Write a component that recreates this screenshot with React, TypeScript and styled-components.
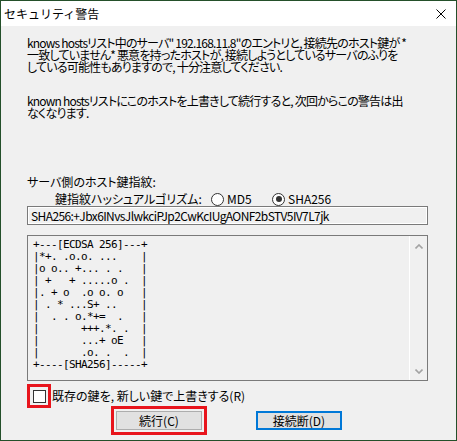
import React from 'react';
import styled, { createGlobalStyle } from 'styled-components';

const GlobalStyle = createGlobalStyle`
  html, body {
    margin: 0;
    padding: 0;
    background: #f0f0f0;
  }
  body {
    font-family: "Noto Sans CJK JP", sans-serif;
    color: #000;
  }
`;

const Window = styled.div`
  width: 457px;
  height: 441px;
  box-sizing: border-box;
  border: 1px solid #24502a;
  display: flex;
  flex-direction: column;
  background: #f0f0f0;
`;

const TitleBar = styled.header`
  height: 25px;
  flex: none;
  background: #fff;
  display: flex;
  align-items: center;
  justify-content: space-between;
  padding: 0 10px 0 3px;
`;

const Title = styled.h1`
  margin: 0;
  font-size: 12px;
  font-weight: normal;
  line-height: 12px;
`;

const CloseIcon = () => (
  <svg width="10" height="10" viewBox="0 0 10 10">
    <path d="M0.5 0.5 L9.5 9.5 M9.5 0.5 L0.5 9.5" stroke="#000" strokeWidth="1" fill="none" />
  </svg>
);

const Client = styled.main`
  flex: 1;
  display: flex;
  flex-direction: column;
  padding: 11px 0 0 26px;
  font-size: 12px;
  line-height: 12px;
  font-feature-settings: "palt";
`;

const Paragraph = styled.div<{ $gap?: number }>`
  margin-top: ${p => p.$gap ?? 0}px;
  letter-spacing: -0.8px;
`;

const Line = styled.div`
  height: 12px;
  white-space: nowrap;
`;

const Label = styled.div<{ $gap?: number }>`
  margin-top: ${p => p.$gap ?? 0}px;
  white-space: nowrap;
`;

const AlgoRow = styled.div`
  margin-top: 4px;
  height: 14px;
  padding-left: 28px;
  display: flex;
  align-items: center;
`;

const AlgoLabel = styled.span`
  width: 156px;
`;

const RadioOption = styled.label<{ $width: number }>`
  display: flex;
  align-items: center;
  gap: 3px;
  width: ${p => p.$width}px;
`;

const RadioCircle = styled.span<{ $checked?: boolean }>`
  width: 13px;
  height: 13px;
  box-sizing: border-box;
  border-radius: 50%;
  border: 1px solid #333;
  background: #fff;
  display: flex;
  align-items: center;
  justify-content: center;
  &::after {
    content: '';
    width: 6px;
    height: 6px;
    border-radius: 50%;
    background: ${p => (p.$checked ? '#333' : 'transparent')};
  }
`;

const Field = styled.div`
  width: 401px;
  height: 19px;
  box-sizing: border-box;
  border: 1px solid #7a7a7a;
  box-shadow: inset 0 0 0 1px #fff;
  padding: 0 3px;
  display: flex;
  align-items: center;
  white-space: nowrap;
  letter-spacing: -0.6px;
`;

const ArtBox = styled.div`
  margin-top: 10px;
  width: 401px;
  height: 146px;
  box-sizing: border-box;
  border: 1px solid #7a7a7a;
  display: flex;
`;

const Art = styled.pre`
  flex: 1;
  margin: 0;
  padding: 3px 0 0 5px;
  font-family: "DejaVu Sans Mono", monospace;
  font-size: 11px;
  letter-spacing: -0.62px;
  line-height: 12px;
`;

const ScrollBar = styled.div`
  width: 17px;
  border-left: 1px solid #fff;
  display: flex;
  flex-direction: column;
  justify-content: space-between;
  align-items: center;
  padding: 8px 0 6px;
`;

const Chevron = ({ down }: { down?: boolean }) => (
  <svg width="8" height="5" viewBox="0 0 8 5">
    <path
      d={down ? 'M0.5 0.5 L4 4 L7.5 0.5' : 'M0.5 4.5 L4 1 L7.5 4.5'}
      stroke="#a3a3a3"
      strokeWidth="1.6"
      fill="none"
    />
  </svg>
);

const CheckRow = styled.label`
  margin-top: 3px;
  display: flex;
  align-items: center;
  gap: 1px;
  white-space: nowrap;
`;

const HighlightFrame = styled.span`
  width: 24px;
  height: 24px;
  box-sizing: border-box;
  border: 3px solid #e8141c;
  display: flex;
  align-items: center;
  justify-content: center;
`;

const CheckBox = styled.span`
  width: 13px;
  height: 13px;
  box-sizing: border-box;
  border: 1px solid #333;
  background: #fff;
`;

const ButtonRow = styled.div`
  margin-top: 3px;
  padding-left: 89px;
  display: flex;
  gap: 54px;
`;

const Button = styled.button<{ $focused?: boolean; $highlight?: boolean }>`
  width: 86px;
  height: 19px;
  box-sizing: border-box;
  padding: 0;
  background: #e1e1e1;
  border: ${p => (p.$focused ? '2px solid #0078d7' : '1px solid #adadad')};
  font-family: inherit;
  font-size: 12px;
  line-height: 12px;
  color: #000;
  outline: ${p => (p.$highlight ? '3px solid #e8141c' : 'none')};
  outline-offset: 2px;
`;

const art = [
  '+---[ECDSA 256]---+',
  '|*+. .o.o. ...    |',
  '|o o.. +... . .   |',
  '| +   + .....o .  |',
  '|. + o  .o o. o   |',
  '| . * ...S+ ..    |',
  '|  . . o.*+=  .   |',
  '|       +++.*. .  |',
  '|       ...+ oE   |',
  '|       .o. .  .  |',
  '+----[SHA256]-----+',
].join('\n');

export default function App() {
  return (
    <>
      <GlobalStyle />
      <Window>
        <TitleBar>
          <Title>セキュリティ警告</Title>
          <CloseIcon />
        </TitleBar>
        <Client>
          <Paragraph>
            <Line>knows hostsリスト中のサーバ" 192.168.11.8"のエントリと, 接続先のホスト鍵が *</Line>
            <Line>一致していません* 悪意を持ったホストが, 接続しようとしているサーバのふりを</Line>
            <Line>している可能性もありますので, 十分注意してください.</Line>
          </Paragraph>
          <Paragraph $gap={22}>
            <Line>known hostsリストにこのホストを上書きして続行すると, 次回からこの警告は出</Line>
            <Line>なくなります.</Line>
          </Paragraph>
          <Label $gap={57}>サーバ側のホスト鍵指紋:</Label>
          <AlgoRow>
            <AlgoLabel>鍵指紋ハッシュアルゴリズム:</AlgoLabel>
            <RadioOption $width={61}>
              <RadioCircle />
              MD5
            </RadioOption>
            <RadioOption $width={70}>
              <RadioCircle $checked />
              SHA256
            </RadioOption>
          </AlgoRow>
          <Field>SHA256:+Jbx6INvsJlwkciPJp2CwKcIUgAONF2bSTV5IV7L7jk</Field>
          <ArtBox>
            <Art>{art}</Art>
            <ScrollBar>
              <Chevron />
              <Chevron down />
            </ScrollBar>
          </ArtBox>
          <CheckRow>
            <HighlightFrame>
              <CheckBox />
            </HighlightFrame>
            既存の鍵を, 新しい鍵で上書きする(R)
          </CheckRow>
          <ButtonRow>
            <Button $highlight>続行(C)</Button>
            <Button $focused>接続断(D)</Button>
          </ButtonRow>
        </Client>
      </Window>
    </>
  );
}
